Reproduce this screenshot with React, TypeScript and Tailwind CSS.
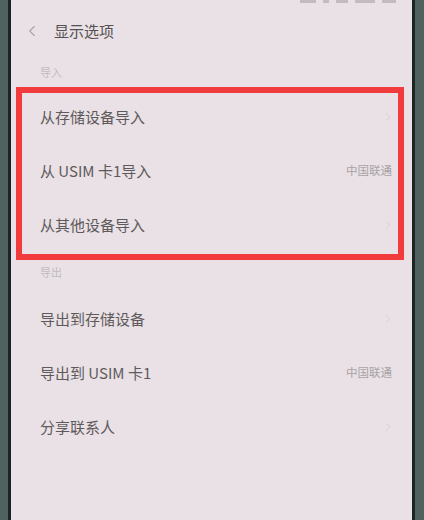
import { ChevronLeft, ChevronRight } from 'lucide-react';

type Row = { label: string; hint?: string };

const importRows: Row[] = [
  { label: '从存储设备导入' },
  { label: '从 USIM 卡1导入', hint: '中国联通' },
  { label: '从其他设备导入' },
];

const exportRows: Row[] = [
  { label: '导出到存储设备' },
  { label: '导出到 USIM 卡1', hint: '中国联通' },
  { label: '分享联系人' },
];

const font = { fontFamily: '"Noto Sans CJK SC", "Noto Sans", sans-serif' };

function SettingRow({ label, hint }: Row) {
  return (
    <div className="flex h-[54px] items-center justify-between pl-[29px] pr-[20px]">
      <span className="text-[15px] text-[#5e5a5c]">{label}</span>
      {hint ? (
        <span className="text-[11.5px] text-[#a8a2a5]">{hint}</span>
      ) : (
        <ChevronRight size={14} strokeWidth={1.5} className="-mr-[3px] text-[#d4ccd0]" />
      )}
    </div>
  );
}

function SectionLabel({ text, tall }: { text: string; tall?: boolean }) {
  return (
    <div className={`flex items-center pl-[29px] ${tall ? 'h-[40px]' : 'h-[20px]'}`}>
      <span className="text-[11px] text-[#c2bbbe]">{text}</span>
    </div>
  );
}

export default function App() {
  return (
    <div className="flex h-[520px] w-[424px] overflow-hidden bg-[#4f625f]" style={font}>
      {/* phone bezel, left */}
      <div className="w-[8px] bg-[#4f625f]" />
      <div className="w-[3px] bg-[#1d2524]" />

      {/* screen */}
      <div className="relative flex flex-1 flex-col bg-[#e9e1e5]">
        {/* status bar, mostly cut off */}
        <div className="absolute right-[16px] top-0 flex h-[3px] gap-[7px] opacity-40">
          <div className="h-[3px] w-[16px] bg-[#8a8588]" />
          <div className="h-[3px] w-[6px] bg-[#8a8588]" />
          <div className="h-[3px] w-[12px] bg-[#8a8588]" />
          <div className="h-[3px] w-[20px] bg-[#8a8588]" />
          <div className="h-[3px] w-[14px] bg-[#8a8588]" />
        </div>

        <div className="flex h-[62px] items-center pl-[12px]">
          <ChevronLeft size={18} strokeWidth={1.5} className="text-[#a9a3a6]" />
          <span className="ml-[13px] text-[15px] text-[#555052]">显示选项</span>
        </div>

        <SectionLabel text="导入" />
        <div className="mt-[8px]">
          {importRows.map((r) => (
            <SettingRow key={r.label} {...r} />
          ))}
        </div>

        <SectionLabel text="导出" tall />
        {exportRows.map((r) => (
          <SettingRow key={r.label} {...r} />
        ))}

        {/* highlight frame around the import options */}
        <div className="absolute left-[5px] top-[87px] h-[173px] w-[388px] border-[6px] border-[#f13b3d]" />
      </div>

      {/* phone bezel, right */}
      <div className="w-[3px] bg-[#1d2524]" />
      <div className="w-[9px] bg-[#4f625f]" />
    </div>
  );
}
